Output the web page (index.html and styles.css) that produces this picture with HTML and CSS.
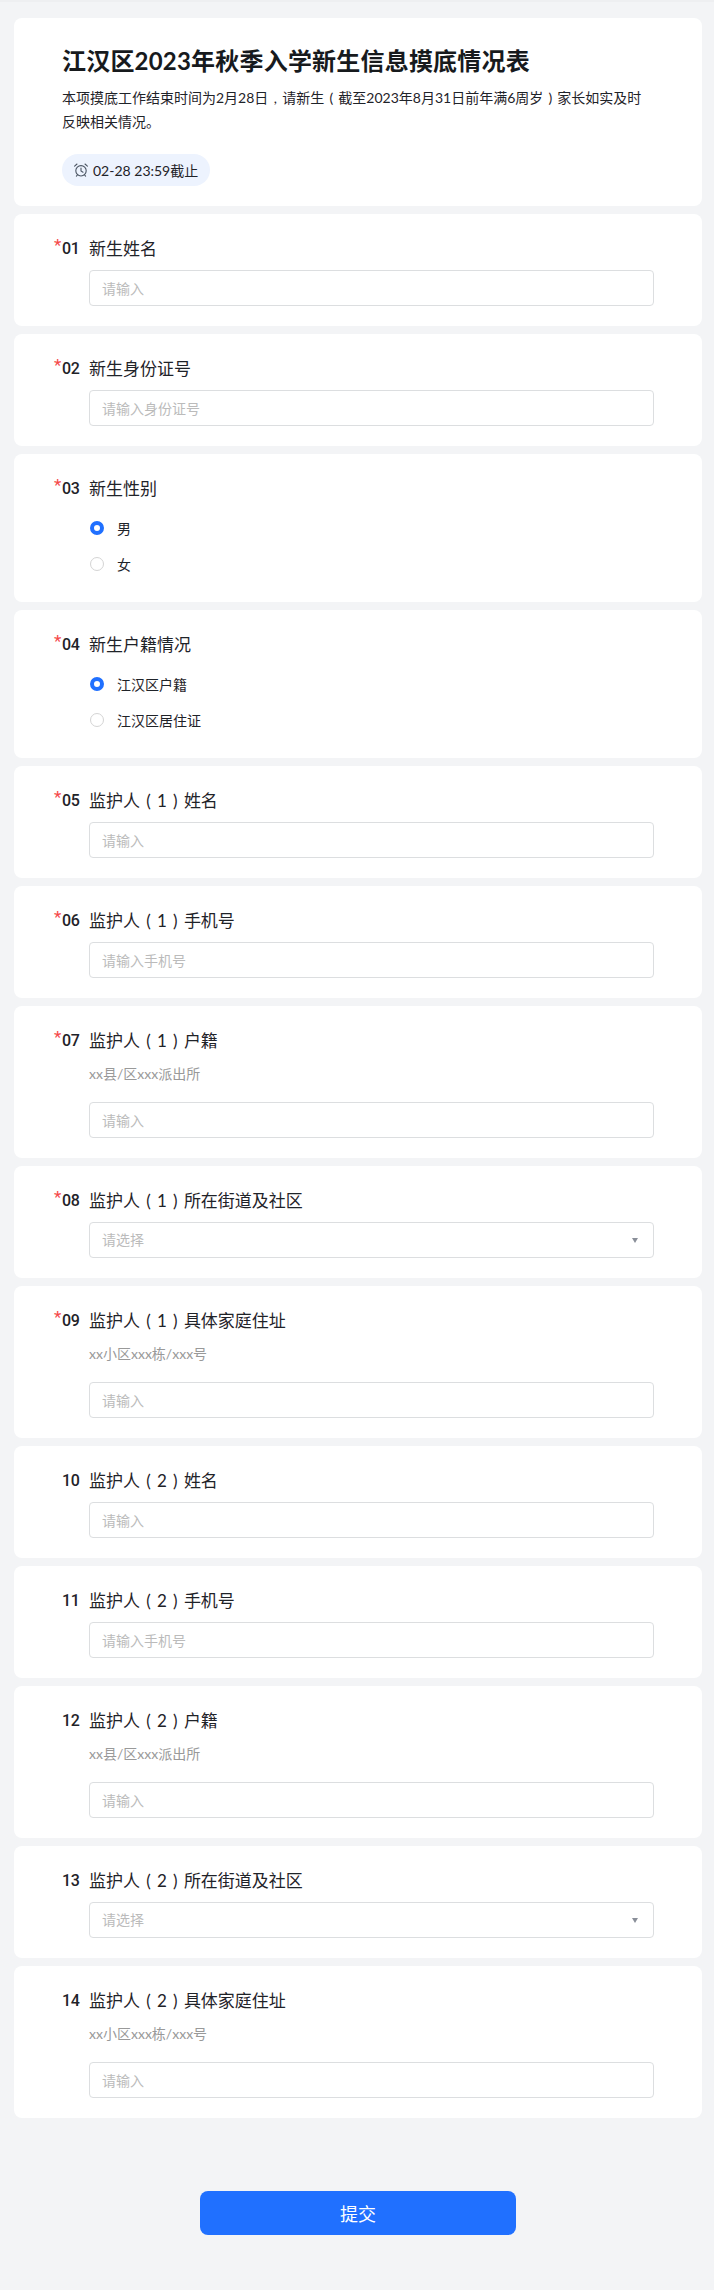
FILE: index.html
```html
<!DOCTYPE html>
<html lang="zh-CN">
<head>
<meta charset="UTF-8">
<meta name="viewport" content="width=device-width, initial-scale=1.0">
<title>江汉区2023年秋季入学新生信息摸底情况表</title>
<link rel="stylesheet" href="styles.css">
</head>
<body>

<div class="page">
  <div class="card header">
    <h1>江汉区2023年秋季入学新生信息摸底情况表</h1>
    <p class="intro">本项摸底工作结束时间为2月28日<span class="pun">,</span>请新生<span class="pun">(</span>截至2023年8月31日前年满6周岁<span class="pun">)</span>家长如实及时<br>反映相关情况。</p>
    <div class="deadline">
      <svg class="clock" width="16" height="16" viewBox="0 0 16 16" fill="none" stroke="#4b5563" stroke-width="1.1" stroke-linecap="round">
        <circle cx="8" cy="8.8" r="5.2"/>
        <path d="M8 6v3l2 1.2"/>
        <path d="M1.6 4.2 4 2M14.4 4.2 12 2"/>
        <path d="M4.4 13 3.4 14.2M11.6 13l1 1.2"/>
      </svg>
      <span>02-28 23:59截止</span>
    </div>
  </div>

  <form>
    <div class="card question">
      <div class="label"><span class="star">*</span><span class="num">01</span><span>新生姓名</span></div>
      <input class="field" type="text" placeholder="请输入">
    </div>

    <div class="card question">
      <div class="label"><span class="star">*</span><span class="num">02</span><span>新生身份证号</span></div>
      <input class="field" type="text" placeholder="请输入身份证号">
    </div>

    <div class="card question">
      <div class="label"><span class="star">*</span><span class="num">03</span><span>新生性别</span></div>
      <label class="option"><input type="radio" name="sex" checked>男</label>
      <label class="option"><input type="radio" name="sex">女</label>
    </div>

    <div class="card question">
      <div class="label"><span class="star">*</span><span class="num">04</span><span>新生户籍情况</span></div>
      <label class="option"><input type="radio" name="huji" checked>江汉区户籍</label>
      <label class="option"><input type="radio" name="huji">江汉区居住证</label>
    </div>

    <div class="card question">
      <div class="label"><span class="star">*</span><span class="num">05</span><span>监护人<span class="pun">(</span>1<span class="pun">)</span>姓名</span></div>
      <input class="field" type="text" placeholder="请输入">
    </div>

    <div class="card question">
      <div class="label"><span class="star">*</span><span class="num">06</span><span>监护人<span class="pun">(</span>1<span class="pun">)</span>手机号</span></div>
      <input class="field" type="text" placeholder="请输入手机号">
    </div>

    <div class="card question">
      <div class="label"><span class="star">*</span><span class="num">07</span><span>监护人<span class="pun">(</span>1<span class="pun">)</span>户籍</span></div>
      <div class="hint">xx县/区xxx派出所</div>
      <input class="field" type="text" placeholder="请输入">
    </div>

    <div class="card question">
      <div class="label"><span class="star">*</span><span class="num">08</span><span>监护人<span class="pun">(</span>1<span class="pun">)</span>所在街道及社区</span></div>
      <div class="select">请选择</div>
    </div>

    <div class="card question">
      <div class="label"><span class="star">*</span><span class="num">09</span><span>监护人<span class="pun">(</span>1<span class="pun">)</span>具体家庭住址</span></div>
      <div class="hint">xx小区xxx栋/xxx号</div>
      <input class="field" type="text" placeholder="请输入">
    </div>

    <div class="card question">
      <div class="label"><span class="num">10</span><span>监护人<span class="pun">(</span>2<span class="pun">)</span>姓名</span></div>
      <input class="field" type="text" placeholder="请输入">
    </div>

    <div class="card question">
      <div class="label"><span class="num">11</span><span>监护人<span class="pun">(</span>2<span class="pun">)</span>手机号</span></div>
      <input class="field" type="text" placeholder="请输入手机号">
    </div>

    <div class="card question">
      <div class="label"><span class="num">12</span><span>监护人<span class="pun">(</span>2<span class="pun">)</span>户籍</span></div>
      <div class="hint">xx县/区xxx派出所</div>
      <input class="field" type="text" placeholder="请输入">
    </div>

    <div class="card question">
      <div class="label"><span class="num">13</span><span>监护人<span class="pun">(</span>2<span class="pun">)</span>所在街道及社区</span></div>
      <div class="select">请选择</div>
    </div>

    <div class="card question">
      <div class="label"><span class="num">14</span><span>监护人<span class="pun">(</span>2<span class="pun">)</span>具体家庭住址</span></div>
      <div class="hint">xx小区xxx栋/xxx号</div>
      <input class="field" type="text" placeholder="请输入">
    </div>

    <div class="submit-row">
      <button type="button" class="submit">提交</button>
    </div>
  </form>
</div>

</body>
</html>
```

FILE: styles.css
```css
body {
  font-family: Lato, "Noto Sans CJK SC", sans-serif;
  margin: 0;
  padding: 0;
  background-color: #f3f4f6;
  color: #1f2329;
}

.page {
  padding: 16px 12px 55px 14px;
  border-top: 2px solid #eeeff1;
}

.card {
  background-color: #fff;
  border-radius: 8px;
  margin-bottom: 8px;
}

.header {
  height: 188px;
  box-sizing: border-box;
  padding: 26px 48px 20px 48px;
}

h1 {
  font-size: 24px;
  line-height: 34px;
  font-weight: 700;
  letter-spacing: 0.2px;
  margin: 0 0 8px;
  color: #171a1d;
}

.intro {
  font-size: 14px;
  line-height: 24px;
  margin: 0 0 20px;
}

/* punctuation sits in the middle of a full-width box here */
.pun {
  display: inline-block;
  width: 1em;
  text-align: center;
}

.deadline {
  display: inline-flex;
  align-items: center;
  gap: 4px;
  height: 32px;
  padding: 0 12px 0 11px;
  border-radius: 16px;
  background-color: #edf3fe;
  font-size: 14px;
}

.question {
  padding: 24px 48px 20px 40px;
}

.label {
  display: flex;
  align-items: center;
  height: 22px;
  font-size: 17px;
  line-height: 22px;
  margin-bottom: 10px;
  position: relative;
  padding-left: 8px;
}

.star {
  position: absolute;
  left: 0;
  top: -4px;
  color: #f5484a;
  font-family: Roboto, sans-serif;
  font-size: 17px;
}

.num {
  width: 27px;
  flex: none;
  font-family: Roboto, sans-serif;
  font-size: 16px;
  font-weight: 500;
  letter-spacing: -0.3px;
}

.hint {
  margin: 12px 0 18px 35px;
  font-size: 14px;
  line-height: 20px;
  color: #999;
}

.field,
.select {
  display: block;
  box-sizing: border-box;
  width: 565px;
  height: 36px;
  margin-left: 35px;
  padding: 0 12px;
  border: 1px solid #dcdee0;
  border-radius: 4px;
  background-color: #fff;
  font-family: inherit;
  font-size: 14px;
  line-height: 34px;
  outline: none;
}

.field::placeholder {
  color: #bbb;
}

.select {
  color: #bbb;
  position: relative;
}

.select::after {
  content: "";
  position: absolute;
  right: 15px;
  top: 15px;
  border-left: 3px solid transparent;
  border-right: 3px solid transparent;
  border-top: 5px solid #8a8f99;
}

.option {
  display: flex;
  align-items: center;
  height: 36px;
  margin-left: 36px;
  font-size: 14px;
}

.option input {
  appearance: none;
  box-sizing: border-box;
  flex: none;
  width: 14px;
  height: 14px;
  margin: 0 13px 0 0;
  border: 1px solid #d4d4d4;
  border-radius: 50%;
  background-color: #fff;
}

.option input:checked {
  border: 4px solid #2070ff;
}

.submit-row {
  display: flex;
  justify-content: center;
  padding-top: 65px;
}

.submit {
  width: 316px;
  height: 44px;
  border: none;
  border-radius: 8px;
  background-color: #2070ff;
  color: #fff;
  font-family: inherit;
  font-size: 18px;
  cursor: pointer;
}
```
